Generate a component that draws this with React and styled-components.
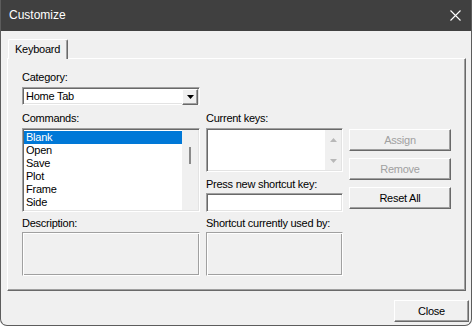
import React from 'react';
import styled, { createGlobalStyle, css } from 'styled-components';

const GlobalStyle = createGlobalStyle`
  html, body {
    margin: 0;
    padding: 0;
    background: #ffffff;
  }
  * {
    box-sizing: border-box;
  }
`;

const sunken = css`
  border: 1px solid;
  border-color: #a0a0a0 #ffffff #ffffff #a0a0a0;
  box-shadow: inset 1px 1px 0 #696969, inset -1px -1px 0 #e3e3e3;
`;

const etched = css`
  border: 1px solid;
  border-color: #a0a0a0 #ffffff #ffffff #a0a0a0;
  box-shadow: inset 1px 1px 0 #ffffff, inset -1px -1px 0 #a0a0a0;
`;

const Window = styled.div`
  width: 472px;
  height: 326px;
  display: flex;
  flex-direction: column;
  background: #f0f0f0;
  border: 1px solid #5c5c5c;
  border-top: none;
  border-radius: 0 0 7px 7px;
  overflow: hidden;
  font-family: "Liberation Sans", Arial, sans-serif;
  font-size: 11px;
  letter-spacing: -0.25px;
  color: #000;
`;

const TitleBar = styled.div`
  height: 31px;
  flex: none;
  display: flex;
  align-items: center;
  justify-content: space-between;
  background: #404040;
  color: #ffffff;
  padding: 0 10px 1px 9px;
  margin: 0 -1px;
`;

const Title = styled.span`
  font-size: 12px;
  letter-spacing: 0;
`;

const CloseGlyph = styled.svg`
  width: 11px;
  height: 11px;
  margin-right: 1px;
`;

const Body = styled.div`
  flex: 1;
  display: flex;
  flex-direction: column;
  padding: 8px 5px 0 6px;
`;

const TabStrip = styled.div`
  display: flex;
  height: 19px;
  padding-left: 1px;
  position: relative;
  z-index: 1;
`;

const Tab = styled.div`
  width: 60px;
  height: 20px;
  padding: 3px 0 0 6px;
  background: #f0f0f0;
  border-left: 1px solid #ffffff;
  border-top: 1px solid #ffffff;
  border-right: 1px solid #696969;
  box-shadow: inset -1px 0 0 #a0a0a0;
  border-radius: 2px 2px 0 0;
`;

const Panel = styled.div`
  height: 233px;
  padding: 12px 0 0 14px;
  border-left: 1px solid #ffffff;
  border-top: 1px solid #ffffff;
  border-right: 1px solid #696969;
  border-bottom: 1px solid #696969;
  box-shadow: inset -1px -1px 0 #a0a0a0;
`;

const Label = styled.div`
  height: 13px;
  line-height: 13px;
  margin-top: ${(p) => p.$mt || 0}px;
  margin-bottom: ${(p) => (p.$mb === undefined ? 3 : p.$mb)}px;
  white-space: nowrap;
`;

const Combo = styled.div`
  width: 178px;
  height: 18px;
  display: flex;
  background: #ffffff;
  ${sunken};
  padding: 1px;
`;

const ComboText = styled.div`
  flex: 1;
  padding: 1px 0 0 2px;
  line-height: 13px;
`;

const DropButton = styled.div`
  width: 16px;
  height: 16px;
  flex: none;
  display: flex;
  align-items: center;
  justify-content: center;
  background: #f0f0f0;
  border: 1px solid;
  border-color: #ffffff #696969 #696969 #ffffff;
  box-shadow: inset -1px -1px 0 #a0a0a0;
`;

const Grid = styled.div`
  display: grid;
  grid-template-columns: 178px 137px 102px;
  column-gap: 6px;
  margin-top: 7px;
`;

const Column = styled.div`
  display: flex;
  flex-direction: column;
`;

const ListBox = styled.div`
  height: 84px;
  display: flex;
  background: #ffffff;
  ${sunken};
  padding: 2px 1px 1px 1px;
  overflow: hidden;
`;

const Items = styled.div`
  flex: 1;
  overflow: hidden;
`;

const Item = styled.div`
  height: 13px;
  line-height: 13px;
  padding-left: 2px;
  background: ${(p) => (p.$selected ? '#0078d7' : 'transparent')};
  color: ${(p) => (p.$selected ? '#ffffff' : '#000000')};
`;

const ThinScroll = styled.div`
  width: 16px;
  flex: none;
  background: #f0f0f0;
  display: flex;
  justify-content: center;
  padding-top: 17px;
  margin: -1px 0 0 0;
`;

const Thumb = styled.div`
  width: 2px;
  height: 17px;
  background: #8a8a8a;
`;

const KeysBox = styled.div`
  height: 44px;
  display: flex;
  background: #ffffff;
  ${sunken};
  padding: 1px 1px 1px 1px;
`;

const KeysText = styled.div`
  flex: 1;
`;

const ArrowTrack = styled.div`
  width: 16px;
  flex: none;
  background: #f0f0f0;
  display: flex;
  flex-direction: column;
  justify-content: space-between;
  align-items: center;
  padding: 8px 0 7px;
`;

const Input = styled.div`
  height: 19px;
  background: #ffffff;
  ${sunken};
`;

const InfoBox = styled.div`
  height: 44px;
  ${etched};
`;

const ButtonColumn = styled.div`
  display: flex;
  flex-direction: column;
  gap: 7px;
  padding-top: 17px;
`;

const Button = styled.div`
  height: 22px;
  width: ${(p) => p.$width || 102}px;
  display: flex;
  align-items: center;
  justify-content: center;
  padding-bottom: 1px;
  background: #f0f0f0;
  color: ${(p) => (p.$disabled ? '#a0a0a0' : '#000000')};
  border: 1px solid;
  border-color: #ffffff #696969 #696969 #ffffff;
  box-shadow: inset -1px -1px 0 #a0a0a0;
`;

const Footer = styled.div`
  display: flex;
  justify-content: flex-end;
  padding: 9px 0 0 0;
  margin-right: -3px;
`;

const commands = ['Blank', 'Open', 'Save', 'Plot', 'Frame', 'Side', 'Top'];

const Triangle = ({ up, color }) => (
  <svg width="7" height="4" viewBox="0 0 7 4">
    <polygon points={up ? '0,4 7,4 3.5,0' : '0,0 7,0 3.5,4'} fill={color} />
  </svg>
);

export default function App() {
  return (
    <>
      <GlobalStyle />
      <Window>
        <TitleBar>
          <Title>Customize</Title>
          <CloseGlyph viewBox="0 0 11 11">
            <path d="M0.5 0.5 L10.5 10.5 M10.5 0.5 L0.5 10.5" stroke="#ffffff" strokeWidth="1.1" />
          </CloseGlyph>
        </TitleBar>
        <Body>
          <TabStrip>
            <Tab>Keyboard</Tab>
          </TabStrip>
          <Panel>
            <Label>Category:</Label>
            <Combo>
              <ComboText>Home Tab</ComboText>
              <DropButton>
                <Triangle color="#000000" />
              </DropButton>
            </Combo>
            <Grid>
              <Column>
                <Label>Commands:</Label>
                <ListBox>
                  <Items>
                    {commands.map((c, i) => (
                      <Item key={c} $selected={i === 0}>
                        {c}
                      </Item>
                    ))}
                  </Items>
                  <ThinScroll>
                    <Thumb />
                  </ThinScroll>
                </ListBox>
                <Label $mt={5} $mb={2}>Description:</Label>
                <InfoBox />
              </Column>
              <Column>
                <Label>Current keys:</Label>
                <KeysBox>
                  <KeysText />
                  <ArrowTrack>
                    <Triangle up color="#b8b8b8" />
                    <Triangle color="#b8b8b8" />
                  </ArrowTrack>
                </KeysBox>
                <Label $mt={6} $mb={2}>Press new shortcut key:</Label>
                <Input />
                <Label $mt={5} $mb={2}>Shortcut currently used by:</Label>
                <InfoBox />
              </Column>
              <ButtonColumn>
                <Button $disabled>Assign</Button>
                <Button $disabled>Remove</Button>
                <Button>Reset All</Button>
              </ButtonColumn>
            </Grid>
          </Panel>
          <Footer>
            <Button $width={75}>Close</Button>
          </Footer>
        </Body>
      </Window>
    </>
  );
}
